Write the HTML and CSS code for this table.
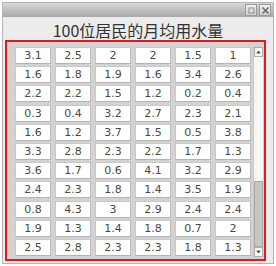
FILE: index.html
```html
<!DOCTYPE html>
<html>
<head>
<meta charset="utf-8">
<link rel="stylesheet" href="styles.css">
</head>
<body>
<div class="window">
  <div class="titlebar">
    <span class="tbtn">
      <svg width="9" height="9" viewBox="0 0 9 9"><rect x="2" y="2" width="5" height="5" fill="none" stroke="#8a8a8a" stroke-width="1"/></svg>
    </span>
    <span class="tbtn">
      <svg width="9" height="9" viewBox="0 0 9 9"><path d="M1.5 1.5 L7.5 7.5 M7.5 1.5 L1.5 7.5" stroke="#6a6a6a" stroke-width="1.6"/></svg>
    </span>
  </div>
  <h1 class="title">100位居民的月均用水量</h1>
  <div class="panel">
    <div class="grid">
      <div class="cell">3.1</div><div class="cell">2.5</div><div class="cell">2</div><div class="cell">2</div><div class="cell">1.5</div><div class="cell">1</div>
      <div class="cell">1.6</div><div class="cell">1.8</div><div class="cell">1.9</div><div class="cell">1.6</div><div class="cell">3.4</div><div class="cell">2.6</div>
      <div class="cell">2.2</div><div class="cell">2.2</div><div class="cell">1.5</div><div class="cell">1.2</div><div class="cell">0.2</div><div class="cell">0.4</div>
      <div class="cell">0.3</div><div class="cell">0.4</div><div class="cell">3.2</div><div class="cell">2.7</div><div class="cell">2.3</div><div class="cell">2.1</div>
      <div class="cell">1.6</div><div class="cell">1.2</div><div class="cell">3.7</div><div class="cell">1.5</div><div class="cell">0.5</div><div class="cell">3.8</div>
      <div class="cell">3.3</div><div class="cell">2.8</div><div class="cell">2.3</div><div class="cell">2.2</div><div class="cell">1.7</div><div class="cell">1.3</div>
      <div class="cell">3.6</div><div class="cell">1.7</div><div class="cell">0.6</div><div class="cell">4.1</div><div class="cell">3.2</div><div class="cell">2.9</div>
      <div class="cell">2.4</div><div class="cell">2.3</div><div class="cell">1.8</div><div class="cell">1.4</div><div class="cell">3.5</div><div class="cell">1.9</div>
      <div class="cell">0.8</div><div class="cell">4.3</div><div class="cell">3</div><div class="cell">2.9</div><div class="cell">2.4</div><div class="cell">2.4</div>
      <div class="cell">1.9</div><div class="cell">1.3</div><div class="cell">1.4</div><div class="cell">1.8</div><div class="cell">0.7</div><div class="cell">2</div>
      <div class="cell">2.5</div><div class="cell">2.8</div><div class="cell">2.3</div><div class="cell">2.3</div><div class="cell">1.8</div><div class="cell">1.3</div>
    </div>
    <div class="scrollbar">
      <div class="arrow">
        <svg width="8" height="8" viewBox="0 0 8 8"><path d="M4 2.5 L6.5 5.5 L1.5 5.5 Z" fill="#333"/></svg>
      </div>
      <div class="track"><div class="thumb"></div></div>
      <div class="arrow">
        <svg width="8" height="8" viewBox="0 0 8 8"><path d="M1.5 2.5 L6.5 2.5 L4 5.5 Z" fill="#333"/></svg>
      </div>
    </div>
  </div>
</div>
</body>
</html>
```
FILE: styles.css
```css
html, body {
  margin: 0;
  padding: 0;
  background: #ffffff;
}
body {
  font-family: "DejaVu Sans", Verdana, sans-serif;
}
.window {
  margin: 2px 0 0 2px;
  width: 270px;
  height: 260px;
  border: 1px solid #b4b4b4;
  background: #ececec;
  display: flex;
  flex-direction: column;
}
.titlebar {
  height: 14px;
  background: linear-gradient(#d8d8d8, #a9a9a9);
  display: flex;
  justify-content: flex-end;
  align-items: center;
  gap: 2px;
  padding-right: 2px;
}
.tbtn {
  width: 10px;
  height: 10px;
  border: 1px solid #9a9a9a;
  background: linear-gradient(#f2f2f2, #cfcfcf);
  display: flex;
  align-items: center;
  justify-content: center;
}
.title {
  margin: 0;
  height: 23px;
  font-family: "Noto Sans CJK SC", sans-serif;
  font-weight: normal;
  font-size: 16px;
  line-height: 27px;
  color: #333333;
  text-align: center;
}
.panel {
  margin-left: 2px;
  border: 2px solid #e0191c;
  background: #d3d3d3;
  display: flex;
  gap: 2px;
  padding: 5px 0 0 8px;
  box-sizing: content-box;
  width: 249px;
  height: 212px;
}
.grid {
  display: grid;
  grid-template-columns: repeat(6, 36px);
  grid-auto-rows: 17px;
  column-gap: 4px;
  row-gap: 2.2px;
  width: 236px;
  height: 209px;
}
.cell {
  background: #ffffff;
  border: 1px solid #c8c8c8;
  border-bottom-color: #b4b4b4;
  border-right-color: #bcbcbc;
  box-sizing: border-box;
  font-size: 11px;
  line-height: 16px;
  text-align: center;
  color: #484848;
}
.scrollbar {
  width: 10px;
  height: 210px;
  display: flex;
  flex-direction: column;
  background: #f7f7f7;
  border-left: 1px solid #c8c8c8;
  box-sizing: border-box;
}
.arrow {
  height: 10px;
  background: #f4f4f4;
  border: 1px solid #b0b0b0;
  box-sizing: border-box;
  display: flex;
  align-items: center;
  justify-content: center;
}
.track {
  flex: 1;
  display: flex;
  flex-direction: column;
  justify-content: flex-end;
}
.thumb {
  height: 66px;
  background: #c6c6c6;
  border: 1px solid #a8a8a8;
  box-sizing: border-box;
}
```
